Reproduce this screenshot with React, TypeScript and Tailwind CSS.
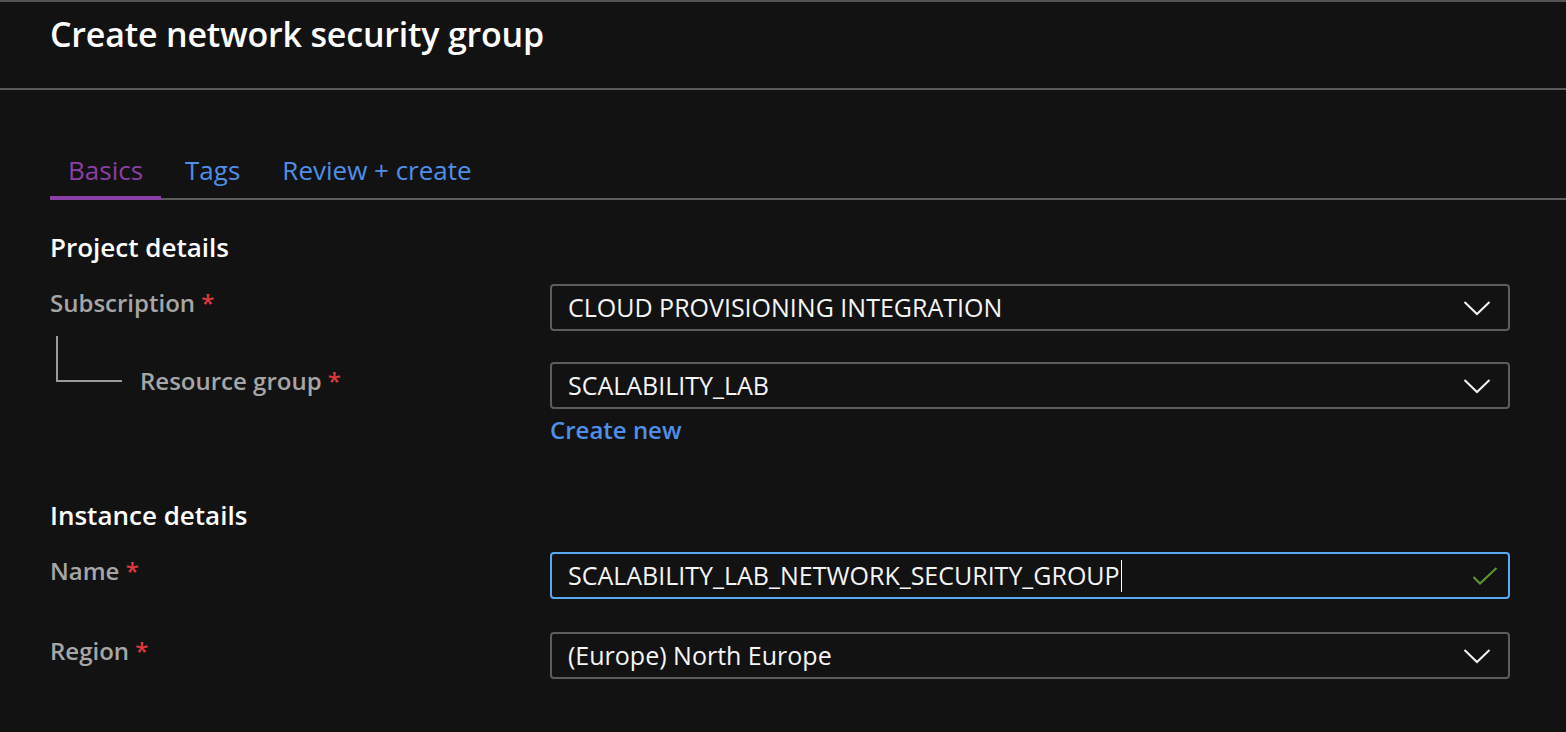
import React from "react";

const font = { fontFamily: '"Open Sans", "Noto Sans", sans-serif' };

function Chevron() {
  return (
    <svg width="28" height="16" viewBox="0 0 28 16" className="shrink-0">
      <path d="M1.5 2 L14 14 L26.5 2" fill="none" stroke="#f2f2f2" strokeWidth="2" />
    </svg>
  );
}

function Check() {
  return (
    <svg width="26" height="18" viewBox="0 0 26 18" className="shrink-0">
      <path d="M1.5 10 L8 16.5 L24.5 1" fill="none" stroke="#5e9a2c" strokeWidth="2" />
    </svg>
  );
}

function Label({ text }: { text: string }) {
  return (
    <div className="text-[24px] font-semibold text-[#a6a6a6] leading-[30px]">
      {text} <span className="text-[#e0383e]">*</span>
    </div>
  );
}

function Select({ value }: { value: string }) {
  return (
    <div className="h-[47px] w-[960px] rounded-[4px] border-2 border-[#5c5c5c] flex items-center justify-between pl-[16px] pr-[17px]">
      <span className="text-[25px] text-[#f5f5f5] leading-none">{value}</span>
      <Chevron />
    </div>
  );
}

export default function App() {
  return (
    <div style={font} className="w-[1566px] h-[732px] bg-[#121212] overflow-hidden border-t-2 border-[#555555]">
      <div className="h-[88px] border-b-2 border-[#5a5a5a] pl-[50px] pt-[10px]">
        <h1 className="text-[34px] font-semibold text-white leading-[44px] tracking-[-0.2px]">Create network security group</h1>
      </div>

      <div className="pl-[50px] pt-[58px]">
        <div className="flex border-b-2 border-[#5c5c5c] h-[52px]">
          <div className="px-[18px] pt-[4px] text-[26px] text-[#8c3fa6] leading-[36px] border-b-4 border-[#8c3fa6] -mb-[2px]">Basics</div>
          <div className="ml-[6px] px-[18px] pt-[4px] text-[26px] text-[#4f8fe9] leading-[36px]">Tags</div>
          <div className="ml-[6px] px-[18px] pt-[4px] text-[26px] text-[#4f8fe9] leading-[36px]">Review + create</div>
        </div>

        <div className="pt-[31px] text-[26px] font-semibold text-white leading-[32px]">Project details</div>

        <div className="mt-[21px] flex">
          <div className="w-[500px] pt-[4px]">
            <Label text="Subscription" />
          </div>
          <Select value="CLOUD PROVISIONING INTEGRATION" />
        </div>

        <div className="mt-[31px] flex">
          <div className="w-[500px] relative">
            <div className="absolute left-[6px] -top-[26px] w-[66px] h-[46px] border-l-2 border-b-2 border-[#9a9a9a]" />
            <div className="pl-[90px] pt-[4px]">
              <Label text="Resource group" />
            </div>
          </div>
          <div>
            <Select value="SCALABILITY_LAB" />
            <div className="mt-[6px] text-[24px] font-semibold text-[#4f8fe9] leading-[30px]">Create new</div>
          </div>
        </div>

        <div className="mt-[54px] text-[26px] font-semibold text-white leading-[32px]">Instance details</div>

        <div className="mt-[21px] flex">
          <div className="w-[500px] pt-[4px]">
            <Label text="Name" />
          </div>
          <div className="h-[47px] w-[960px] rounded-[4px] border-2 border-[#5aa8f2] flex items-center justify-between pl-[16px] pr-[10px]">
            <span className="text-[25px] text-[#f5f5f5] leading-none flex items-center">
              SCALABILITY_LAB_NETWORK_SECURITY_GROUP
              <span className="inline-block w-[1.5px] h-[32px] bg-white ml-[1px]" />
            </span>
            <Check />
          </div>
        </div>

        <div className="mt-[33px] flex">
          <div className="w-[500px] pt-[4px]">
            <Label text="Region" />
          </div>
          <Select value="(Europe) North Europe" />
        </div>
      </div>
    </div>
  );
}
